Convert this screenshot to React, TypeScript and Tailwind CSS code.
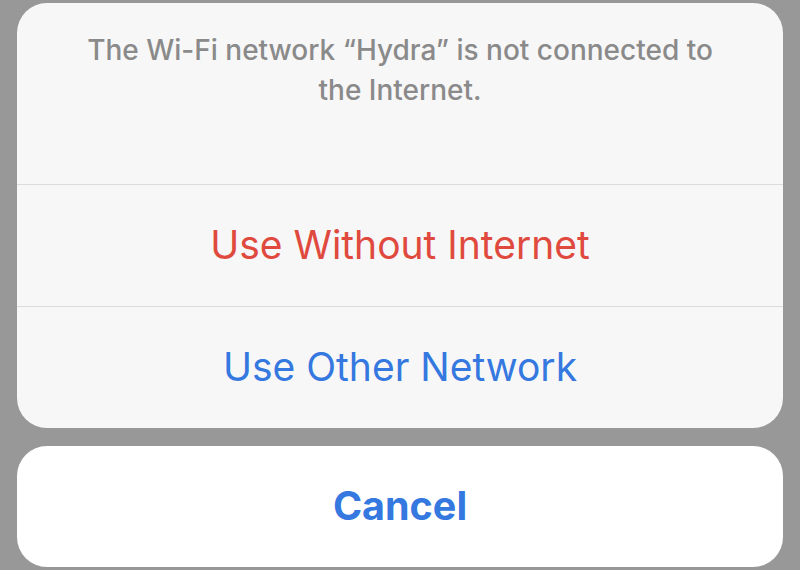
export default function App() {
  return (
    <div
      className="w-[800px] h-[570px] bg-[#989898] px-[17px] pt-[3px] flex flex-col"
      style={{ fontFamily: 'Inter, "Open Sans", sans-serif' }}
    >
      <div className="bg-[#f7f7f7] rounded-[30px] flex flex-col overflow-hidden">
        <div className="h-[181px] pt-[27px] px-[58px] text-center text-[28px] leading-[40px] font-medium text-[#8a8a8a]">
          The Wi-Fi network “Hydra” is not connected to the Internet.
        </div>
        <button className="h-[122px] border-t border-[#dcdcdc] text-[39px] text-[#e04a3e] flex items-center justify-center">
          Use Without Internet
        </button>
        <button className="h-[122px] border-t border-[#dcdcdc] text-[39px] text-[#3478e0] flex items-center justify-center">
          Use Other Network
        </button>
      </div>
      <button className="mt-[18px] h-[121px] bg-white rounded-[30px] text-[39.5px] font-bold text-[#3478e0] flex items-center justify-center">
        Cancel
      </button>
    </div>
  );
}
